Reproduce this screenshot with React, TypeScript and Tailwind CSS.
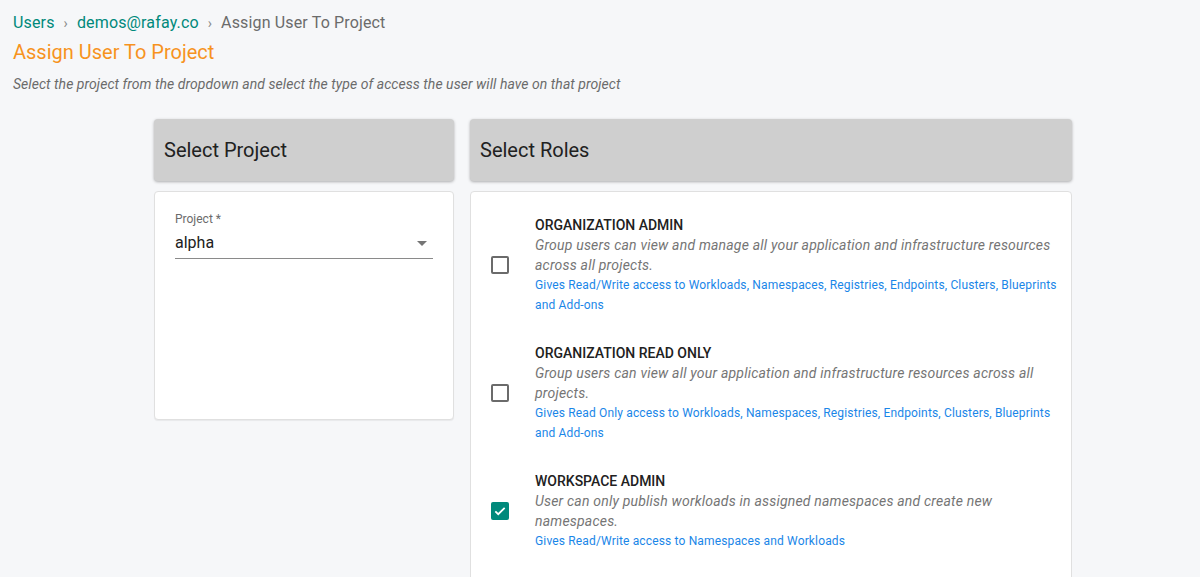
import React from "react";

const roles = [
  {
    title: "ORGANIZATION ADMIN",
    desc: "Group users can view and manage all your application and infrastructure resources across all projects.",
    link: "Gives Read/Write access to Workloads, Namespaces, Registries, Endpoints, Clusters, Blueprints and Add-ons",
    checked: false,
  },
  {
    title: "ORGANIZATION READ ONLY",
    desc: "Group users can view all your application and infrastructure resources across all projects.",
    link: "Gives Read Only access to Workloads, Namespaces, Registries, Endpoints, Clusters, Blueprints and Add-ons",
    checked: false,
  },
  {
    title: "WORKSPACE ADMIN",
    desc: "User can only publish workloads in assigned namespaces and create new namespaces.",
    link: "Gives Read/Write access to Namespaces and Workloads",
    checked: true,
  },
];

function Checkbox({ checked }: { checked: boolean }) {
  if (checked) {
    return (
      <div className="w-[18px] h-[18px] rounded-[2px] bg-[#00897b] flex items-center justify-center shrink-0">
        <svg width="14" height="14" viewBox="0 0 24 24">
          <path d="M4 12.5l5 5L20 6.5" fill="none" stroke="#fff" strokeWidth="3" />
        </svg>
      </div>
    );
  }
  return <div className="w-[18px] h-[18px] rounded-[2px] border-2 border-[#6b6b6b] shrink-0" />;
}

export default function App() {
  return (
    <div
      className="min-h-[577px] bg-[#f6f7f9] text-[#212121]"
      style={{ fontFamily: "Roboto, 'Liberation Sans', sans-serif" }}
    >
      <div className="px-[13px] pt-[12px]">
        {/* Breadcrumb */}
        <div className="flex items-center text-[16px] leading-[22px] tracking-[0.15px]">
          <span className="text-[#00897b]">Users</span>
          <span className="text-[#8a8a8a] mx-[9px] text-[14px]">›</span>
          <span className="text-[#00897b]">demos@rafay.co</span>
          <span className="text-[#8a8a8a] mx-[9px] text-[14px]">›</span>
          <span className="text-[#6b6b6b]">Assign User To Project</span>
        </div>
        <h1 className="text-[20px] leading-[28px] text-[#f7931e] mt-[4px]">Assign User To Project</h1>
        <p className="text-[14px] italic text-[#6b6b6b] mt-[8px] leading-[20px] tracking-[0.05px]">
          Select the project from the dropdown and select the type of access the user will have on that project
        </p>
      </div>

      <div className="flex gap-[16px] pl-[154px] mt-[25px]">
        {/* Left column */}
        <div className="w-[300px] flex flex-col gap-[10px]">
          <div className="h-[62px] bg-[#cfcfcf] rounded-[4px] shadow-[0_1px_3px_rgba(0,0,0,0.3)] flex items-center px-[10px] text-[20px]">
            Select Project
          </div>
          <div className="h-[229px] bg-white rounded-[4px] border border-[#e0e0e0] shadow-[0_1px_1px_rgba(0,0,0,0.06)] px-[20px] pt-[19px]">
            <div className="text-[12px] leading-[16px] text-[#6b6b6b]">Project *</div>
            <div className="flex items-center justify-between border-b border-[#8a8a8a] pb-[3px] mt-[4px]">
              <span className="text-[16px] leading-[20px] text-[#212121]">alpha</span>
              <svg width="24" height="24" viewBox="0 0 24 24" className="mr-[-1px]">
                <path d="M7 10l5 5 5-5z" fill="#757575" />
              </svg>
            </div>
          </div>
        </div>

        {/* Right column */}
        <div className="w-[602px] flex flex-col gap-[10px]">
          <div className="h-[62px] bg-[#cfcfcf] rounded-[4px] shadow-[0_1px_3px_rgba(0,0,0,0.3)] flex items-center px-[10px] text-[20px]">
            Select Roles
          </div>
          <div className="bg-white rounded-[4px] border border-[#e0e0e0] pl-[20px] pr-[12px] pt-[23px] pb-[24px]">
            {roles.map((r) => (
              <div key={r.title} className="flex items-center gap-[26px] pb-[28px]">
                <Checkbox checked={r.checked} />
                <div className="flex-1">
                  <div className="text-[14px] leading-[20px] font-medium text-[#212121]">{r.title}</div>
                  <div className="text-[14px] leading-[20px] italic tracking-[0.2px] text-[#757575]">{r.desc}</div>
                  <div className="text-[12px] leading-[20px] tracking-[0.15px] text-[#1a86e8]">{r.link}</div>
                </div>
              </div>
            ))}
          </div>
        </div>
      </div>
    </div>
  );
}
